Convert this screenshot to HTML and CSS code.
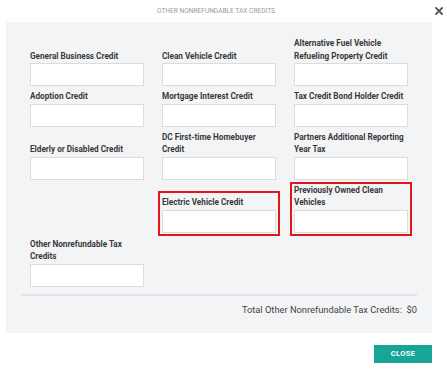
FILE: index.html
```html
<!DOCTYPE html>
<html>
<head>
<meta charset="utf-8">
<link rel="stylesheet" href="styles.css">
</head>
<body>
<div class="dialog">
  <div class="header">
    <div class="title">OTHER NONREFUNDABLE TAX CREDITS</div>
    <div class="close-x">
      <svg width="8" height="8" viewBox="0 0 8 8"><path d="M1 1 L7 7 M7 1 L1 7" stroke="#555" stroke-width="1.8" stroke-linecap="square"/></svg>
    </div>
  </div>
  <div class="panel">
    <div class="grid">
      <div class="field"><label>General Business Credit</label><input type="text"></div>
      <div class="field"><label>Clean Vehicle Credit</label><input type="text"></div>
      <div class="field"><label>Alternative Fuel Vehicle Refueling Property Credit</label><input type="text"></div>

      <div class="field"><label>Adoption Credit</label><input type="text"></div>
      <div class="field"><label>Mortgage Interest Credit</label><input type="text"></div>
      <div class="field"><label>Tax Credit Bond Holder Credit</label><input type="text"></div>

      <div class="field"><label>Elderly or Disabled Credit</label><input type="text"></div>
      <div class="field"><label>DC First-time Homebuyer Credit</label><input type="text"></div>
      <div class="field"><label>Partners Additional Reporting Year Tax</label><input type="text"></div>

      <div class="field empty"></div>
      <div class="field highlight tall"><label>Electric Vehicle Credit</label><input type="text"></div>
      <div class="field highlight"><label>Previously Owned Clean Vehicles</label><input type="text"></div>

      <div class="field"><label>Other Nonrefundable Tax Credits</label><input type="text"></div>
    </div>
    <div class="total">Total Other Nonrefundable Tax Credits:&nbsp; $0</div>
  </div>
  <div class="actions">
    <button class="btn-close">CLOSE</button>
  </div>
</div>
</body>
</html>
```
FILE: styles.css
```css
* { box-sizing: border-box; }
html, body { margin: 0; padding: 0; background: #fff; }
body { font-family: Roboto, "Liberation Sans", sans-serif; width: 447px; }
.header { display: flex; align-items: center; height: 22px; }
.title { flex: 1; text-align: center; font-size: 6.6px; color: #9a9a9a; }
.close-x { width: 16px; display: flex; justify-content: center; align-items: center; margin-left: -1px; }
.panel { margin: 0 15px 0 6px; background: #f3f4f6; padding: 13px 15px 17px; }
.grid { display: grid; grid-template-columns: repeat(3, 122px); column-gap: 10px; align-items: end; margin-left: 5px; }
.field { display: flex; flex-direction: column; border: 2px solid transparent; padding: 0 2px 0; }
.field.highlight { border-color: #e3161b; padding-bottom: 1px; }
.field.tall { padding-top: 3px; }
.field label { font-size: 8.2px; font-weight: 700; color: #3a3a3a; line-height: 12.5px; margin-bottom: 1px; }
.field input { width: 114px; height: 23px; border: 1px solid #dcdcdc; background: #fff; margin: 0; padding: 0; outline: none; }
.total { margin-top: 5px; border-top: 2px solid #e2e3e6; padding-top: 7px; text-align: right; font-size: 9.3px; color: #444; line-height: 13px; }
.actions { display: flex; justify-content: flex-end; padding: 12px 15px 0 0; }
.btn-close { width: 58px; height: 18px; border: none; background: #17a597; color: #fff; font-family: Roboto, "Liberation Sans", sans-serif; font-weight: 700; font-size: 7.5px; letter-spacing: 0.4px; padding: 0; }
```
